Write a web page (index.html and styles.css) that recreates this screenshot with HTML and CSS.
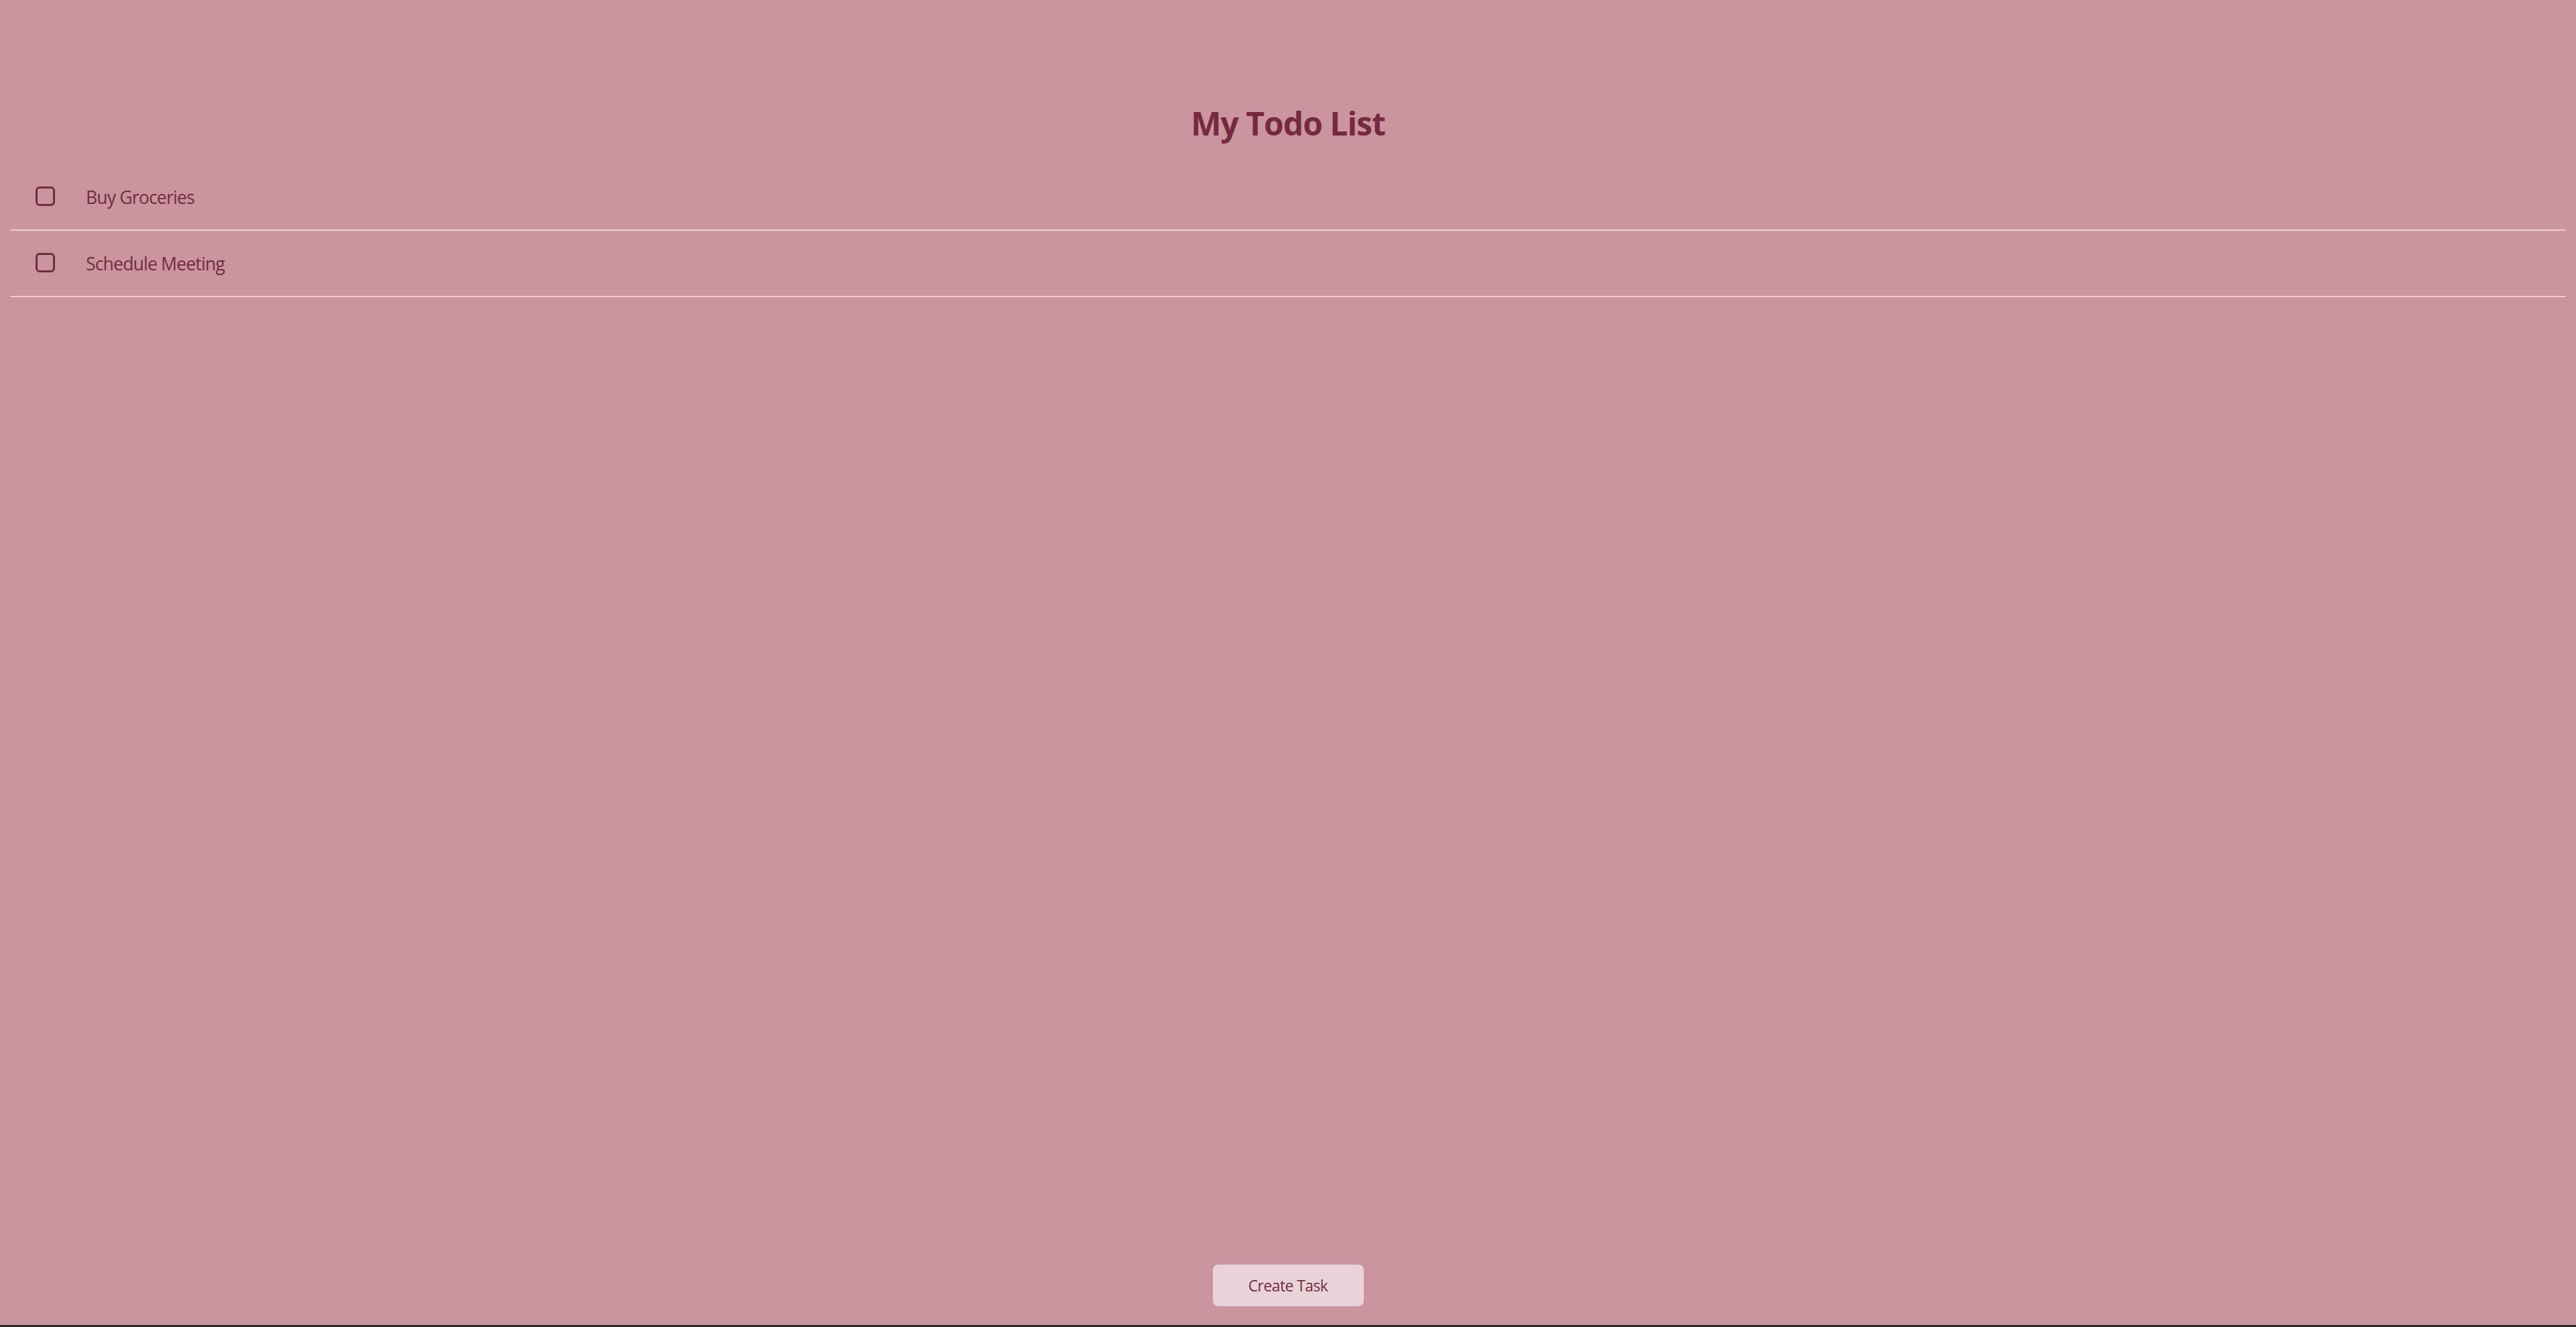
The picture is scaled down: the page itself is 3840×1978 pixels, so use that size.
FILE: index.html
```html
<!DOCTYPE html>
<html lang="en">
<head>
<meta charset="utf-8">
<title>My Todo List</title>
<link rel="stylesheet" href="styles.css">
</head>
<body>
<div class="app">
  <header class="header">
    <h1 class="title">My Todo List</h1>
  </header>
  <ul class="list">
    <li class="item"><span class="check"></span><span class="label">Buy Groceries</span></li>
    <li class="item"><span class="check"></span><span class="label">Schedule Meeting</span></li>
  </ul>
  <footer class="footer">
    <button class="create">Create Task</button>
  </footer>
</div>
</body>
</html>
```
FILE: styles.css
```css
html, body {
  margin: 0;
  padding: 0;
  height: 100%;
}
body {
  background: #2b2b2b;
  font-family: "Open Sans", "Noto Sans", sans-serif;
  color: #732c40;
}
.app {
  height: calc(100vh - 3px);
  background: #ca959e;
  display: flex;
  flex-direction: column;
}
.header {
  padding-top: 154px;
  margin-bottom: 31px;
}
.title {
  margin: 0;
  text-align: center;
  font-size: 48px;
  line-height: 60px;
  font-weight: 700;
  letter-spacing: -1px;
  color: #76293f;
}
.list {
  list-style: none;
  margin: 0 15px;
  padding: 0;
  flex: 1;
}
.item {
  display: flex;
  align-items: center;
  height: 97px;
  border-bottom: 2px solid #f1ccd2;
}
.check {
  width: 23px;
  height: 23px;
  border: 3px solid #732c40;
  border-radius: 6px;
  margin-left: 38px;
  margin-top: -3px;
  flex: none;
}
.label {
  margin-left: 46px;
  font-size: 26.5px;
  letter-spacing: -0.8px;
  color: #732c40;
}
.footer {
  display: flex;
  justify-content: center;
  padding-bottom: 28px;
}
.create {
  width: 225px;
  height: 62px;
  border: none;
  border-radius: 8px;
  background: #e9d3d8;
  color: #732c40;
  font-family: "Open Sans", "Noto Sans", sans-serif;
  font-size: 23px;
  letter-spacing: -0.6px;
  padding: 0;
}
```
